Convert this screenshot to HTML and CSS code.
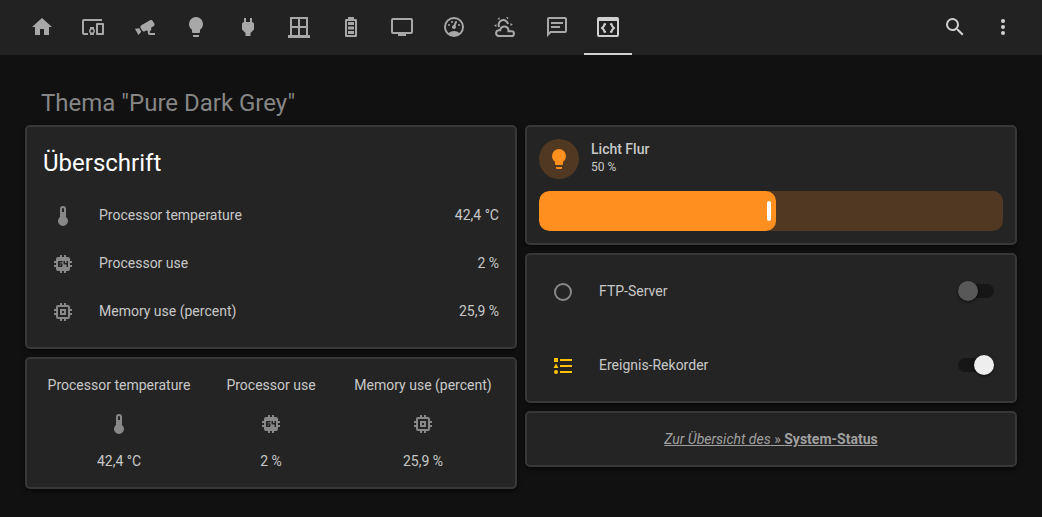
FILE: index.html
```html
<!DOCTYPE html>
<html lang="de">
<head>
<meta charset="utf-8">
<meta name="viewport" content="width=device-width, initial-scale=1">
<title>Thema "Pure Dark Grey"</title>
<link rel="stylesheet" href="styles.css">
</head>
<body>
<svg class="sprite" aria-hidden="true">
  <symbol id="thermometer" viewBox="0 0 24 24"><path fill-rule="evenodd" d="M15 13V5A3 3 0 0 0 9 5V13A5 5 0 1 0 15 13M12 4A1 1 0 0 1 13 5V8H11V5A1 1 0 0 1 12 4Z"/></symbol>
  <symbol id="cpu" viewBox="0 0 24 24"><path fill-rule="evenodd" d="M9,3V5H7A2,2 0 0,0 5,7V9H3V11H5V13H3V15H5V17A2,2 0 0,0 7,19H9V21H11V19H13V21H15V19H17A2,2 0 0,0 19,17V15H21V13H19V11H21V9H19V7A2,2 0 0,0 17,5H15V3H13V5H11V3M8,9H11.5V10.5H8.5V11.25H10.5A1,1 0 0,1 11.5,12.25V14A1,1 0 0,1 10.5,15H8A1,1 0 0,1 7,14V10A1,1 0 0,1 8,9M12.5,9H14V11H15.5V9H17V15H15.5V12.5H13.5A1,1 0 0,1 12.5,11.5V9M8.5,12.75V13.5H10V12.75H8.5Z"/></symbol>
  <symbol id="memory" viewBox="0 0 24 24"><path fill-rule="evenodd" d="M17,17H7V7H17M21,11V9H19V7C19,5.89 18.1,5 17,5H15V3H13V5H11V3H9V5H7C5.89,5 5,5.89 5,7V9H3V11H5V13H3V15H5V17A2,2 0 0,0 7,19H9V21H11V19H13V21H15V19H17A2,2 0 0,0 19,17V15H21V13H19V11Z"/><path fill-rule="evenodd" d="M9 9H15V15H9ZM11 11V13H13V11Z"/></symbol>
  <symbol id="bulb" viewBox="0 0 24 24"><path d="M12,2A7,7 0 0,0 5,9C5,11.38 6.19,13.47 8,14.74V17A1,1 0 0,0 9,18H15A1,1 0 0,0 16,17V14.74C17.81,13.47 19,11.38 19,9A7,7 0 0,0 12,2M9,21A1,1 0 0,0 10,22H14A1,1 0 0,0 15,21V20H9V21Z"/></symbol>
</svg>

<header class="toolbar">
  <nav class="tabs">
    <button class="tab" aria-label="Home"><svg class="icon" viewBox="0 0 24 24"><path d="M10,20V14H14V20H19V12H22L12,3L2,12H5V20H10Z"/></svg></button>
    <button class="tab" aria-label="Geräte"><svg class="icon" viewBox="0 0 24 24"><path fill-rule="evenodd" d="M3 6H21V4H3C1.9 4 1 4.9 1 6V18C1 19.1 1.9 20 3 20H7V18H3V6M13 12H9V13.78C8.39 14.33 8 15.11 8 16C8 16.89 8.39 17.67 9 18.22V20H13V18.22C13.61 17.67 14 16.88 14 16S13.61 14.33 13 13.78V12M11 17.5C10.17 17.5 9.5 16.83 9.5 16S10.17 14.5 11 14.5 12.5 15.17 12.5 16 11.83 17.5 11 17.5M22 8H16C15.5 8 15 8.5 15 9V19C15 19.5 15.5 20 16 20H22C22.5 20 23 19.5 23 19V9C23 8.5 22.5 8 22 8M21 18H17V10H21V18Z"/></svg></button>
    <button class="tab" aria-label="Kameras"><svg class="icon" viewBox="0 0 24 24"><path d="M18.15,4.94C17.77,4.91 17.37,5 17,5.2L8.35,10.2C7.39,10.76 7.07,12 7.62,12.94L9.12,15.53C9.67,16.5 10.89,16.82 11.85,16.27L13.65,15.23C13.92,15.69 14.32,16.06 14.81,16.27V18.04C14.81,19.13 15.7,20 16.81,20H22V18.04H16.81V16.27C17.72,15.87 18.31,14.97 18.31,14C18.31,13.54 18.19,13.11 17.97,12.73L20.5,11.27C21.47,10.71 21.8,9.5 21.24,8.53L19.74,5.94C19.4,5.34 18.79,5 18.15,4.94M6.22,13.17L2,13.87L2.75,15.17L4.75,18.63L5.5,19.93L8.22,16.63L6.22,13.17Z"/></svg></button>
    <button class="tab" aria-label="Licht"><svg class="icon"><use href="#bulb"/></svg></button>
    <button class="tab" aria-label="Strom"><svg class="icon" viewBox="0 0 24 24"><path d="M16,7V3H14V7H10V3H8V7C7,7 6,8 6,9V14.5L9.5,18V21H14.5V18L18,14.5V9C18,8 17,7 16,7Z"/></svg></button>
    <button class="tab" aria-label="Fenster"><svg class="icon" viewBox="0 0 24 24"><path fill-rule="evenodd" d="M21 20V2H3V20H1V23H23V20ZM19 4V11H13V4ZM5 4H11V11H5ZM5 20V13H11V20ZM13 20V13H19V20Z"/></svg></button>
    <button class="tab" aria-label="Batterien"><svg class="icon" viewBox="0 0 24 24"><path fill-rule="evenodd" d="M16 20H8V6H16M16.67 4H15V2H9V4H7.33C6.6 4 6 4.6 6 5.33V20.67C6 21.4 6.6 22 7.33 22H16.67C17.41 22 18 21.41 18 20.67V5.33C18 4.6 17.4 4 16.67 4"/><path d="M15 16H9V19H15V16M15 7H9V10H15V7M15 11.5H9V14.5H15V11.5Z"/></svg></button>
    <button class="tab" aria-label="Medien"><svg class="icon" viewBox="0 0 24 24"><path fill-rule="evenodd" d="M21,17H3V5H21M21,3H3A2,2 0 0,0 1,5V17A2,2 0 0,0 3,19H8V21H16V19H21A2,2 0 0,0 23,17V5A2,2 0 0,0 21,3Z"/></svg></button>
    <button class="tab" aria-label="Messwerte"><svg class="icon" viewBox="0 0 24 24"><path fill-rule="evenodd" d="M12,2A10,10 0 0,0 2,12A10,10 0 0,0 12,22A10,10 0 0,0 22,12A10,10 0 0,0 12,2M12,4A8,8 0 0,1 20,12C20,14.4 19,16.5 17.3,18C15.9,16.7 14,16 12,16C10,16 8.2,16.7 6.7,18C5,16.5 4,14.4 4,12A8,8 0 0,1 12,4"/><path d="M14,5.89C13.62,5.9 13.26,6.15 13.1,6.54L11.81,9.77L11.71,10C11,10.13 10.41,10.6 10.14,11.26C9.73,12.29 10.23,13.45 11.26,13.86C12.29,14.27 13.45,13.77 13.86,12.74C14.12,12.08 14,11.32 13.57,10.76L13.67,10.5L14.96,7.29L14.97,7.26C15.17,6.75 14.92,6.17 14.41,5.96C14.28,5.91 14.15,5.89 14,5.89M10,6A1,1 0 0,0 9,7A1,1 0 0,0 10,8A1,1 0 0,0 11,7A1,1 0 0,0 10,6M7,9A1,1 0 0,0 6,10A1,1 0 0,0 7,11A1,1 0 0,0 8,10A1,1 0 0,0 7,9M17,9A1,1 0 0,0 16,10A1,1 0 0,0 17,11A1,1 0 0,0 18,10A1,1 0 0,0 17,9Z"/></svg></button>
    <button class="tab" aria-label="Wetter"><svg class="icon" viewBox="0 0 24 24"><path class="line" d="M6.2 12A4.7 4.7 0 1 1 15 9.2M6 21A2.9 2.9 0 0 1 6 15.2H7.2A4.2 4.2 0 0 1 15.4 14.6V16.3H18.6A2.3 2.3 0 0 1 18.6 21Z"/><path d="M4.2 4.2L6.4 2.2L6.8 4.6ZM13 2L15.6 2.4L14.6 4.6ZM1 10.4L3.4 9.2V12ZM17.4 8L19.8 9.4L17.6 11Z"/></svg></button>
    <button class="tab" aria-label="Nachrichten"><svg class="icon" viewBox="0 0 24 24"><path fill-rule="evenodd" d="M4,2H20A2,2 0 0,1 22,4V16A2,2 0 0,1 20,18H6L2,22V4C2,2.89 2.9,2 4,2M4,4V17.17L5.17,16H20V4H4M6,7H18V9H6V7M6,11H15V13H6V11Z"/></svg></button>
    <button class="tab tab-active" aria-label="Thema" aria-current="page"><svg class="icon" viewBox="0 0 24 24"><path fill-rule="evenodd" d="M3 2H21A2 2 0 0 1 23 4V20A2 2 0 0 1 21 22H3A2 2 0 0 1 1 20V4A2 2 0 0 1 3 2ZM3 6V20H21V6Z"/><path class="line" d="M10 9.3H8.4L7.8 11.2L6 13L7.8 14.8L8.4 16.7H10M14 9.3H15.6L16.2 11.2L18 13L16.2 14.8L15.6 16.7H14"/></svg></button>
  </nav>
  <div class="actions">
    <button class="tab tab-bright" aria-label="Suche"><svg class="icon" viewBox="0 0 24 24"><path fill-rule="evenodd" d="M9.5,3A6.5,6.5 0 0,1 16,9.5C16,11.11 15.41,12.59 14.44,13.73L14.71,14H15.5L20.5,19L19,20.5L14,15.5V14.71L13.73,14.44C12.59,15.41 11.11,16 9.5,16A6.5,6.5 0 0,1 3,9.5A6.5,6.5 0 0,1 9.5,3M9.5,5C7,5 5,7 5,9.5C5,12 7,14 9.5,14C12,14 14,12 14,9.5C14,7 12,5 9.5,5Z"/></svg></button>
    <button class="tab tab-bright" aria-label="Menü"><svg class="icon" viewBox="0 0 24 24"><circle cx="12" cy="6" r="2"/><circle cx="12" cy="12" r="2"/><circle cx="12" cy="18" r="2"/></svg></button>
  </div>
</header>

<main class="view">
  <h1 class="view-title">Thema "Pure Dark Grey"</h1>
  <div class="columns">
    <div class="column">
      <section class="card entities">
        <h2 class="card-title">Überschrift</h2>
        <div class="row"><span class="badge"><svg class="icon"><use href="#thermometer"/></svg></span><span class="name">Processor temperature</span><span>42,4 °C</span></div>
        <div class="row"><span class="badge"><svg class="icon"><use href="#cpu"/></svg></span><span class="name">Processor use</span><span>2 %</span></div>
        <div class="row"><span class="badge"><svg class="icon"><use href="#memory"/></svg></span><span class="name">Memory use (percent)</span><span>25,9 %</span></div>
      </section>
      <section class="card glance">
        <div class="glance-item"><span>Processor temperature</span><span class="badge"><svg class="icon"><use href="#thermometer"/></svg></span><span>42,4 °C</span></div>
        <div class="glance-item"><span>Processor use</span><span class="badge"><svg class="icon"><use href="#cpu"/></svg></span><span>2 %</span></div>
        <div class="glance-item"><span>Memory use (percent)</span><span class="badge"><svg class="icon"><use href="#memory"/></svg></span><span>25,9 %</span></div>
      </section>
    </div>
    <div class="column">
      <section class="card light">
        <div class="light-head">
          <span class="badge badge-light"><svg class="icon"><use href="#bulb"/></svg></span>
          <div class="light-text"><label class="light-name" for="flur">Licht Flur</label><span class="light-state">50 %</span></div>
        </div>
        <div class="slider">
          <div class="slider-fill" style="width: 51%"><span class="slider-handle"></span></div>
          <input class="slider-input" id="flur" type="range" min="0" max="100" value="50">
        </div>
      </section>
      <section class="card switches">
        <div class="row switch-row"><span class="badge"><svg class="icon" viewBox="0 0 24 24"><circle class="ring" cx="12" cy="12" r="8"/></svg></span><label class="name" for="ftp">FTP-Server</label><input class="toggle" id="ftp" type="checkbox" role="switch"></div>
        <div class="row switch-row"><span class="badge badge-on"><svg class="icon" viewBox="0 0 24 24"><path d="M5,9.5L7.5,14H2.5L5,9.5M3,4H7V8H3V4M5,20A2,2 0 0,0 7,18A2,2 0 0,0 5,16A2,2 0 0,0 3,18A2,2 0 0,0 5,20M9,5V7H21V5H9M9,19H21V17H9V19M9,13H21V11H9V13Z"/></svg></span><label class="name" for="rec">Ereignis-Rekorder</label><input class="toggle" id="rec" type="checkbox" role="switch" checked></div>
      </section>
      <section class="card link-card"><a class="link" href="#"><em>Zur Übersicht des</em> » <strong>System-Status</strong></a></section>
    </div>
  </div>
</main>
</body>
</html>
```
FILE: styles.css
```css
* { box-sizing: border-box; }

body {
  margin: 0;
  min-height: 100vh;
  background: #111;
  color: #c8c8c8;
  font: 14px/20px Roboto, "Liberation Sans", sans-serif;
}

.sprite { display: none; }
.icon { display: block; width: 24px; height: 24px; fill: currentColor; }
.line { fill: none; stroke: currentColor; stroke-width: 2; }
.ring { fill: none; stroke: currentColor; stroke-width: 2; }

.toolbar {
  display: flex;
  justify-content: space-between;
  padding: 0 15px 0 18px;
  background: #222;
}
.tabs { white-space: nowrap; }
.actions { display: flex; }
.tab {
  display: inline-block;
  vertical-align: top;
  padding: 15px 12px 14px;
  border: 0;
  border-bottom: 2px solid transparent;
  background: none;
  color: #a8a8a8;
}
.tab-active { color: #d0d0d0; border-bottom-color: #d0d0d0; }
.tab-bright { color: #d0d0d0; }

.view { padding: 32px 25px 25px; }
.view-title {
  margin: 0;
  padding: 0 16px 6px;
  color: #868686;
  font-size: 24px;
  font-weight: 400;
  line-height: 32px;
}
.columns { display: grid; grid-template-columns: 1fr 1fr; gap: 8px; align-items: start; }
.column { display: grid; gap: 8px; }

.card {
  border: 2px solid #383838;
  border-radius: 5px;
  background: #242424;
  box-shadow: 0 2px 5px rgba(0, 0, 0, 0.6);
}
.card-title {
  margin: 0;
  color: #fff;
  font-size: 24px;
  font-weight: 400;
  line-height: 48px;
}
.badge {
  display: grid;
  place-items: center;
  width: 40px;
  height: 40px;
  padding-top: 2px;
  color: #888;
}
.row { display: flex; align-items: center; }
.name { flex: 1; padding-left: 16px; }

.entities { display: grid; gap: 8px; padding: 12px 16px 16px; }

.glance { display: grid; grid-template-columns: repeat(3, 1fr); padding: 16px; }
.glance-item { display: grid; gap: 8px; justify-items: center; }

.light { display: grid; gap: 12px; padding: 12px; }
.light-head { display: flex; gap: 12px; }
.light-text { display: grid; align-content: start; }
.light-name { font-weight: 500; }
.light-state { font-size: 12px; line-height: 16px; }
.badge-light { padding: 0; border-radius: 50%; background: #503822; color: #ff8f1e; }
.slider {
  position: relative;
  height: 40px;
  overflow: hidden;
  border-radius: 10px;
  background: #503822;
}
.slider-fill {
  display: flex;
  align-items: center;
  justify-content: flex-end;
  height: 100%;
  padding-right: 5px;
  border-radius: 10px;
  background: #ff8f1e;
}
.slider-handle { width: 4px; height: 20px; border-radius: 2px; background: #fff; }
.slider-input { position: absolute; inset: 0; width: 100%; height: 100%; margin: 0; opacity: 0; }

.switches { display: grid; gap: 2px; }
.switch-row { padding: 16px 21px 16px 16px; }
.badge-on { color: #ffc107; }
.toggle {
  appearance: none;
  display: flex;
  align-items: center;
  width: 36px;
  height: 14px;
  margin: 0;
  border-radius: 7px;
  background: #161616;
}
.toggle::before {
  content: "";
  width: 20px;
  height: 20px;
  flex: none;
  border-radius: 50%;
  background: #585858;
  box-shadow: 0 1px 3px rgba(0, 0, 0, 0.6);
}
.toggle:checked { justify-content: flex-end; }
.toggle:checked::before { background: #eee; }

.link-card { padding: 16px; text-align: center; }
.link { color: #a0a0a0; }
```
